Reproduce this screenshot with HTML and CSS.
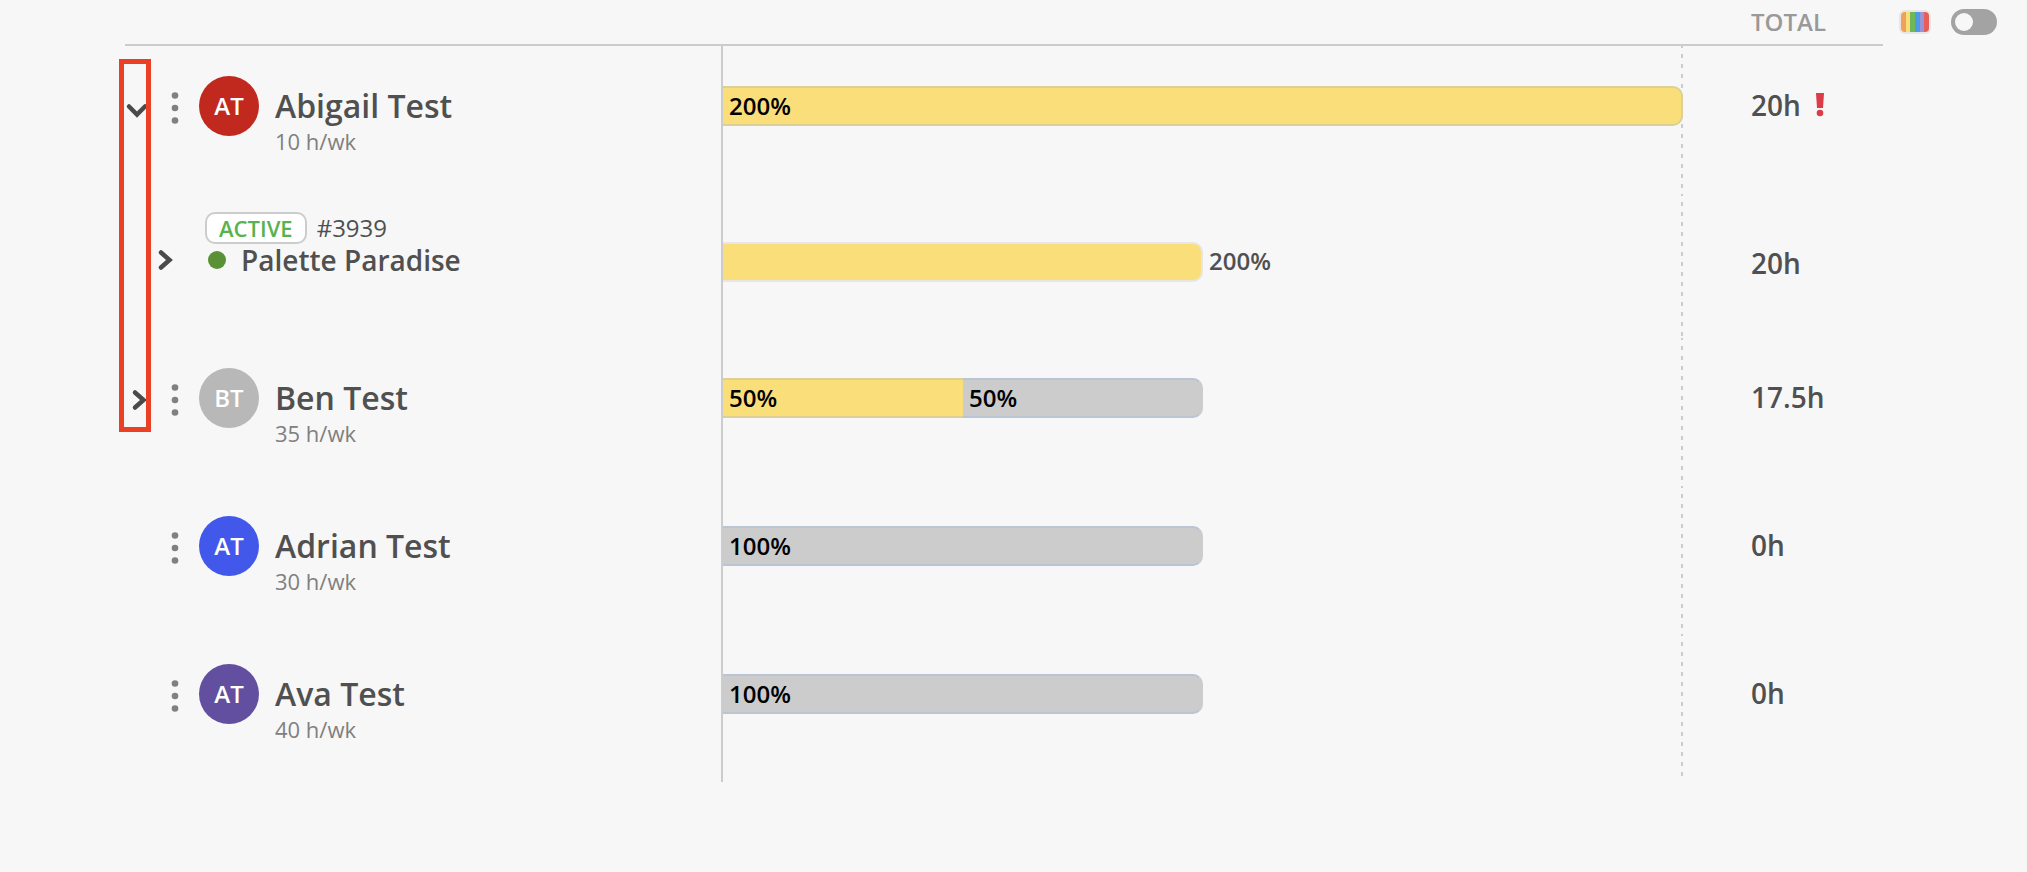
FILE: index.html
```
<!DOCTYPE html>
<html lang="en">
<head>
  <meta charset="UTF-8" />
  <meta name="viewport" content="width=device-width, initial-scale=1.0"/>
  <title>Workload</title>
  <link rel="stylesheet" href="styles.css">
</head>
<body>

<!-- Header -->
<header class="header">
  <div class="header-line">
    <span class="header-total">TOTAL</span>
  </div>
  <div class="tools">
    <button class="palette" aria-label="Colors">
      <svg width="32" height="24" viewBox="0 0 32 24">
        <rect width="32" height="24" rx="6" fill="#e6e6e6"/>
        <path d="M7 2H6a4 4 0 0 0-4 4v12a4 4 0 0 0 4 4h1z" fill="#f0a05a"/>
        <rect x="7" y="2" width="4" height="20" fill="#fade7a"/>
        <rect x="11" y="2" width="5" height="20" fill="#70b857"/>
        <rect x="16" y="2" width="5" height="20" fill="#4a9ae8"/>
        <rect x="21" y="2" width="4" height="20" fill="#9b93d8"/>
        <path d="M25 2h1a4 4 0 0 1 4 4v12a4 4 0 0 1-4 4h-1z" fill="#e75d57"/>
      </svg>
    </button>
    <input class="switch" type="checkbox" aria-label="Show colors">
  </div>
</header>

<!-- People -->
<main class="people">
  <div class="row">
    <div class="person">
      <button class="arrow" aria-label="Collapse">
        <svg width="24" height="60" viewBox="0 0 24 60"><path d="M4 30.5l8 8 8-8"/></svg>
      </button>
      <button class="dots" aria-label="Menu">
        <svg width="20" height="60" viewBox="0 0 20 60"><circle cx="10" cy="19.5" r="3.3"/><circle cx="10" cy="32" r="3.3"/><circle cx="10" cy="44.5" r="3.3"/></svg>
      </button>
      <span class="avatar red">AT</span>
      <div class="info">
        <div class="name">Abigail Test</div>
        <div class="hours">10 h/wk</div>
      </div>
    </div>
    <div class="chart">
      <div class="bar yellow last" style="width: 100%">200%</div>
    </div>
    <div class="total">20h
      <svg class="alert" width="8" height="24" viewBox="0 0 8 24"><path d="M0 0h8l-1 15H1z"/><circle cx="4" cy="20" r="3.3"/></svg>
    </div>
  </div>

  <div class="row project-row">
    <div class="project">
      <button class="arrow" aria-label="Expand">
        <svg width="24" height="60" viewBox="0 0 24 60"><path d="M10 24.5l8.5 7.5-8.5 7.5"/></svg>
      </button>
      <div class="project-info">
        <div class="tags">
          <span class="badge">ACTIVE</span>
          <span class="number">#3939</span>
        </div>
        <div class="project-name"><span class="dot"></span>Palette Paradise</div>
      </div>
    </div>
    <div class="chart">
      <div class="bar yellow soft last" style="width: 50%"></div>
      <span class="outside">200%</span>
    </div>
    <div class="total">20h</div>
  </div>

  <div class="row">
    <div class="person">
      <button class="arrow" aria-label="Expand">
        <svg width="24" height="60" viewBox="0 0 24 60"><path d="M10 24.5l8.5 7.5-8.5 7.5"/></svg>
      </button>
      <button class="dots" aria-label="Menu">
        <svg width="20" height="60" viewBox="0 0 20 60"><circle cx="10" cy="19.5" r="3.3"/><circle cx="10" cy="32" r="3.3"/><circle cx="10" cy="44.5" r="3.3"/></svg>
      </button>
      <span class="avatar silver">BT</span>
      <div class="info">
        <div class="name">Ben Test</div>
        <div class="hours">35 h/wk</div>
      </div>
    </div>
    <div class="chart">
      <div class="bar yellow" style="width: 25%">50%</div>
      <div class="bar gray last" style="width: 25%">50%</div>
    </div>
    <div class="total">17.5h</div>
  </div>

  <div class="row">
    <div class="person">
      <span></span>
      <button class="dots" aria-label="Menu">
        <svg width="20" height="60" viewBox="0 0 20 60"><circle cx="10" cy="19.5" r="3.3"/><circle cx="10" cy="32" r="3.3"/><circle cx="10" cy="44.5" r="3.3"/></svg>
      </button>
      <span class="avatar blue">AT</span>
      <div class="info">
        <div class="name">Adrian Test</div>
        <div class="hours">30 h/wk</div>
      </div>
    </div>
    <div class="chart">
      <div class="bar gray last" style="width: 50%">100%</div>
    </div>
    <div class="total">0h</div>
  </div>

  <div class="row">
    <div class="person">
      <span></span>
      <button class="dots" aria-label="Menu">
        <svg width="20" height="60" viewBox="0 0 20 60"><circle cx="10" cy="19.5" r="3.3"/><circle cx="10" cy="32" r="3.3"/><circle cx="10" cy="44.5" r="3.3"/></svg>
      </button>
      <span class="avatar purple">AT</span>
      <div class="info">
        <div class="name">Ava Test</div>
        <div class="hours">40 h/wk</div>
      </div>
    </div>
    <div class="chart">
      <div class="bar gray last" style="width: 50%">100%</div>
    </div>
    <div class="total">0h</div>
  </div>

  <!-- Outline over the arrows -->
  <div class="highlight"></div>
</main>

</body>
</html>
```
FILE: styles.css
```
* { margin: 0; padding: 0; box-sizing: border-box; }
body {
  background-color: #f7f7f7;
  font-family: 'Open Sans', sans-serif;
  color: #505050;
}

button {
  background: none;
  border: none;
  cursor: pointer;
}

svg {
  display: block;
}

/* Header */
.header {
  display: flex;
  padding-left: 125px;
}

.header-line {
  flex: 1;
  display: flex;
  justify-content: flex-end;
  height: 46px;
  border-bottom: 2px solid #cccccc;
}

.header-total {
  width: 132px;
  font-size: 24px;
  font-weight: 600;
  line-height: 44px;
  color: #999999;
}

.tools {
  width: 144px;
  height: 44px;
  display: flex;
  align-items: center;
  gap: 20px;
  padding-left: 16px;
}

.switch {
  appearance: none;
  width: 46px;
  height: 26px;
  padding: 4px;
  border-radius: 13px;
  background-color: #a3a3a3;
  cursor: pointer;
}

.switch::before {
  content: "";
  display: block;
  width: 18px;
  height: 18px;
  border-radius: 50%;
  background-color: #f7f7f7;
}

.switch:checked::before {
  margin-left: 20px;
}

/* Rows */
.people {
  position: relative;
  padding: 0 144px 0 125px;
}

.row {
  display: grid;
  grid-template-columns: 596px 1fr 200px;
  min-height: 148px;
}

.person {
  display: grid;
  grid-template-columns: 40px 34px 76px 1fr;
  align-items: start;
  padding-top: 30px;
}

.arrow, .dots {
  justify-self: start;
}

.arrow path {
  fill: none;
  stroke: #4a4a4a;
  stroke-width: 4.5;
  stroke-linecap: round;
}

.dots circle {
  fill: #808080;
}

.avatar {
  width: 60px;
  height: 60px;
  border-radius: 50%;
  color: white;
  font-size: 24px;
  font-weight: 600;
  line-height: 60px;
  text-align: center;
}

.red { background-color: #c1291e; }
.silver { background-color: #b9b8b8; }
.blue { background-color: #4258ea; }
.purple { background-color: #634fa0; }

.info {
  padding-top: 10px;
}

.name {
  font-size: 32px;
  font-weight: 600;
  line-height: 40px;
}

.hours {
  font-size: 22px;
  line-height: 30px;
  color: #808080;
}

/* Project */
.project-row {
  min-height: 144px;
}

.project {
  display: flex;
  align-items: flex-start;
  padding: 18px 0 0 26px;
}

.project .arrow {
  margin-top: 16px;
}

.project-info {
  padding-left: 30px;
}

.tags {
  display: flex;
  gap: 10px;
}

.badge {
  padding: 0 12px;
  border: 2px solid #cccccc;
  border-radius: 10px;
  background-color: white;
  color: #57b34f;
  font-size: 22px;
  font-weight: 600;
  line-height: 28px;
}

.number {
  font-size: 24px;
  line-height: 32px;
}

.project-name {
  display: flex;
  align-items: center;
  gap: 15px;
  padding-left: 3px;
  font-size: 28px;
  font-weight: 600;
  line-height: 32px;
}

.dot {
  width: 18px;
  height: 18px;
  border-radius: 50%;
  background-color: #5b9136;
}

/* Chart */
.chart {
  display: flex;
  align-items: flex-start;
  padding-top: 40px;
  border-left: 2px solid #cccccc;
  background: repeating-linear-gradient(to bottom, #cccccc 0 2px, transparent 2px 8px, #cccccc 8px 10px) right top / 2px 100% no-repeat;
}

.project-row .chart {
  padding-top: 48px;
}

.bar {
  height: 40px;
  padding-left: 6px;
  border: solid;
  border-width: 2px 0;
  color: black;
  font-size: 24px;
  font-weight: 600;
  line-height: 36px;
}

.last {
  border-right-width: 2px;
  border-radius: 0 10px 10px 0;
}

.yellow {
  background-color: #fade7a;
  border-color: #dcd096;
}

.soft {
  border-color: #e6e6e6;
}

.gray {
  background-color: #cccccc;
  border-color: #b9c5d3;
  border-right-color: #cccccc;
}

.outside {
  padding-left: 6px;
  font-size: 24px;
  font-weight: 600;
  line-height: 38px;
}

/* Totals */
.total {
  display: flex;
  align-items: center;
  align-self: start;
  gap: 15px;
  padding: 40px 0 0 68px;
  font-size: 28px;
  font-weight: 600;
  line-height: 38px;
}

.project-row .total {
  padding-top: 50px;
}

.alert {
  fill: #dc3b48;
}

.highlight {
  position: absolute;
  top: 13px;
  left: 119px;
  width: 32px;
  height: 373px;
  border: 5px solid #ea4025;
  pointer-events: none;
}
```
